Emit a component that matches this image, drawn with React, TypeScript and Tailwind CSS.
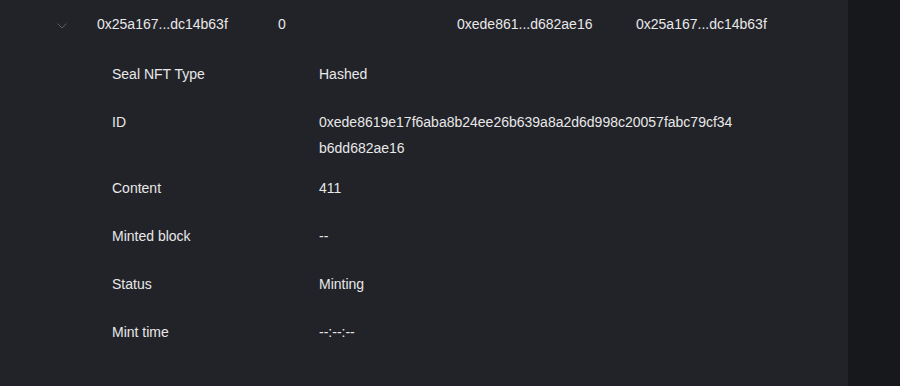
import React from "react";

const details: { label: string; value: string[] }[] = [
  { label: "Seal NFT Type", value: ["Hashed"] },
  {
    label: "ID",
    value: ["0xede8619e17f6aba8b24ee26b639a8a2d6d998c20057fabc79cf34", "b6dd682ae16"],
  },
  { label: "Content", value: ["411"] },
  { label: "Minted block", value: ["--"] },
  { label: "Status", value: ["Minting"] },
  { label: "Mint time", value: ["--:--:--"] },
];

function Chevron() {
  return (
    <svg width="10" height="6" viewBox="0 0 10 6" fill="none">
      <path d="M0.5 0.5 L5 5 L9.5 0.5" stroke="#5c5d63" strokeWidth="1" />
    </svg>
  );
}

export default function App() {
  return (
    <div
      className="flex w-[900px] h-[386px] bg-[#17181c] text-[14px] text-[#e8e8e8]"
      style={{ fontFamily: '"Liberation Sans", Arial, sans-serif' }}
    >
      <div className="w-[848px] h-full bg-[#222328]">
        {/* summary row */}
        <div className="flex items-center h-[50px] pb-[2px]">
          <div className="w-[97px] pl-[57px] flex items-center pt-[4px]">
            <Chevron />
          </div>
          <div className="w-[181px]">0x25a167...dc14b63f</div>
          <div className="w-[179px]">0</div>
          <div className="w-[179px]">0xede861...d682ae16</div>
          <div>0x25a167...dc14b63f</div>
        </div>

        {/* expanded details */}
        <div className="flex flex-col">
          {details.map((d) => (
            <div
              key={d.label}
              className={
                d.value.length > 1
                  ? "flex items-start pt-[11px] pb-[3px] leading-[26px]"
                  : "flex items-start py-[11px] leading-[26px]"
              }
            >
              <div className="w-[319px] pl-[112px]">{d.label}</div>
              <div>
                {d.value.map((line) => (
                  <div key={line}>{line}</div>
                ))}
              </div>
            </div>
          ))}
        </div>
      </div>
    </div>
  );
}
